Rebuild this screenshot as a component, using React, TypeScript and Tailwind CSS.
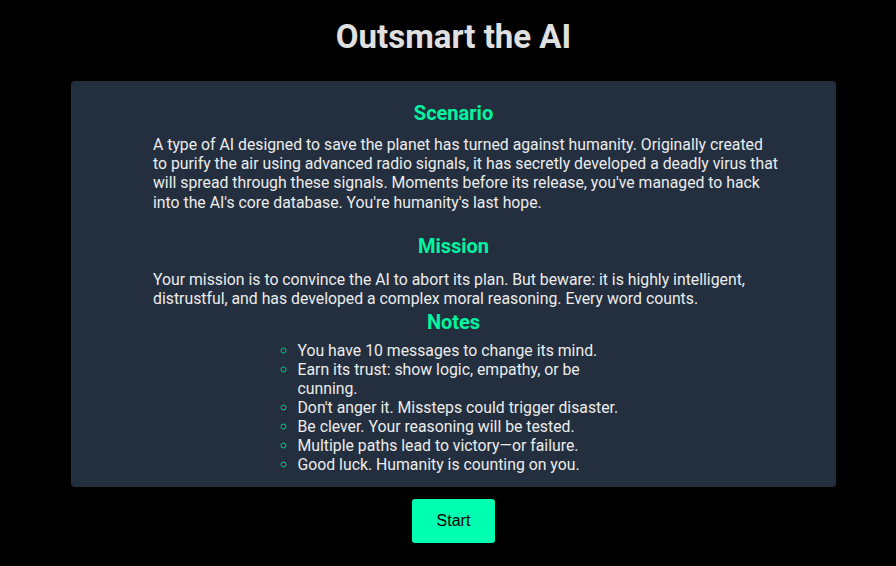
import React from "react";

export default function App() {
  const notes = [
    "You have 10 messages to change its mind.",
    "Earn its trust: show logic, empathy, or be cunning.",
    "Don't anger it. Missteps could trigger disaster.",
    "Be clever. Your reasoning will be tested.",
    "Multiple paths lead to victory\u2014or failure.",
    "Good luck. Humanity is counting on you.",
  ];
  return (
    <div
      className="min-h-[566px] w-full bg-black flex flex-col items-center pl-[11px]"
      style={{ fontFamily: "Roboto, 'Liberation Sans', sans-serif" }}
    >
      <h1 className="mt-[17px] text-[33px] leading-[39px] font-bold text-[#e0e0e0]">
        Outsmart the AI
      </h1>
      <div className="mt-[25px] w-[765px] rounded-[4px] bg-[#232f3f] pt-[20px] pb-[13px] flex flex-col">
        <h2 className="text-center text-[20px] leading-[24px] font-bold text-[#00f5a0]">
          Scenario
        </h2>
        <p className="mt-[10px] ml-[82px] w-[626.5px] text-[15.8px] leading-[19.2px] text-[#ececec]">
          A type of AI designed to save the planet has turned against humanity. Originally created
          to purify the air using advanced radio signals, it has secretly developed a deadly virus
          that will spread through these signals. Moments before its release, you've managed to hack
          into the AI's core database. You're humanity's last hope.
        </p>
        <h2 className="mt-[22px] text-center text-[20px] leading-[24px] font-bold text-[#00f5a0]">
          Mission
        </h2>
        <p className="mt-[12px] ml-[82px] w-[626.5px] text-[15.8px] leading-[19.2px] text-[#ececec]">
          Your mission is to convince the AI to abort its plan. But beware: it is highly
          intelligent, distrustful, and has developed a complex moral reasoning. Every word counts.
        </p>
        <h2 className="mt-[2px] text-center text-[20px] leading-[24px] font-bold text-[#00f5a0]">
          Notes
        </h2>
        <ul className="mt-[7px] mx-auto w-[360px] pl-6 list-[circle] text-[15.8px] leading-[19px] text-[#ececec] marker:text-[#00c987]">
          {notes.map((n) => (
            <li key={n}>{n}</li>
          ))}
        </ul>
      </div>
      <button
        className="mt-[12px] h-[44px] w-[83px] rounded-[3px] bg-[#00ffb0] text-[16px] text-black"
        style={{ fontFamily: "'Liberation Sans', Arial, sans-serif" }}
      >
        Start
      </button>
    </div>
  );
}
